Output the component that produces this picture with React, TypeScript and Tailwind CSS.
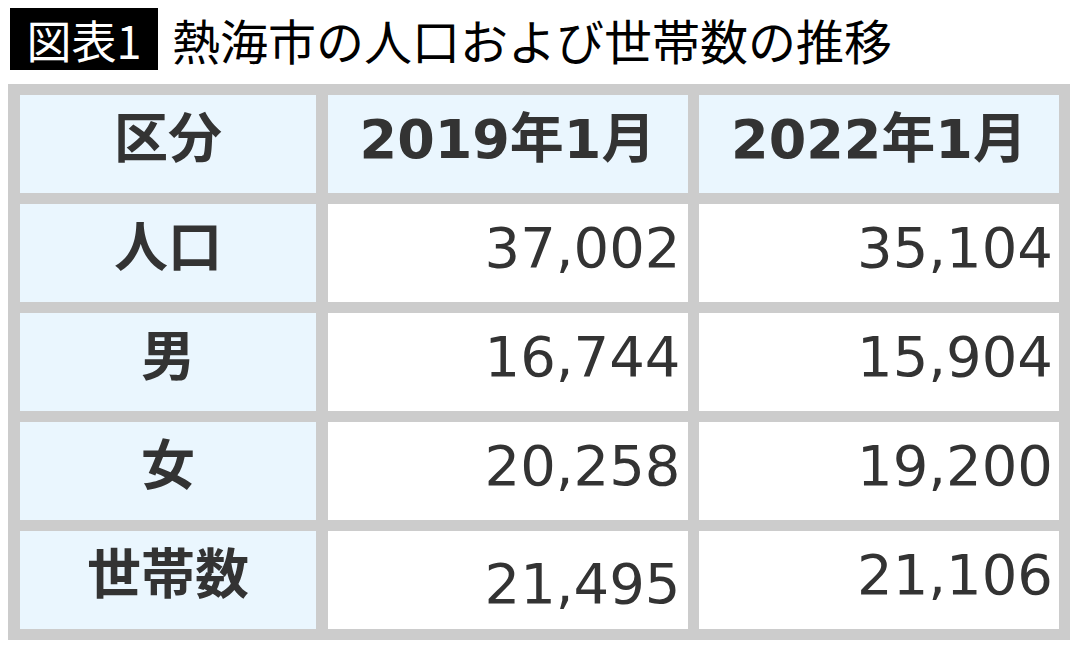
import React from "react";

const rows: { label: string; a: string; b: string; shiftA?: boolean }[] = [
  { label: "人口", a: "37,002", b: "35,104" },
  { label: "男", a: "16,744", b: "15,904" },
  { label: "女", a: "20,258", b: "19,200" },
  { label: "世帯数", a: "21,495", b: "21,106", shiftA: true },
];

export default function App() {
  return (
    <div className="w-[1080px] h-[649px] bg-white overflow-hidden">
      <div className="flex items-center pt-[8px] pl-[10px] font-['Noto_Sans_CJK_JP',sans-serif]">
        <div className="w-[148px] h-[62px] bg-black text-white flex items-center justify-center text-[45px] leading-none">
          図表1
        </div>
        <div className="ml-[14px] text-[48px] leading-none text-black">
          熱海市の人口および世帯数の推移
        </div>
      </div>
      <div className="mt-[14px] ml-[8px] w-[1062px] bg-[#cccccc] pl-[12px] pr-[11px] py-[11px] font-['DejaVu_Sans','Noto_Sans_CJK_JP',sans-serif] text-[#333333] leading-none">
        <div className="grid grid-cols-[296px_360px_360px] grid-rows-[98px_98px_98px_98px_98px] gap-x-[11.5px] gap-y-[11px]">
          {["区分", "2019年1月", "2022年1月"].map((h) => (
            <div
              key={h}
              className="bg-[#eaf6fe] flex items-center justify-center text-[54px] font-bold pb-[8px]"
            >
              {h}
            </div>
          ))}
          {rows.map((r) => (
            <React.Fragment key={r.label}>
              <div className="bg-[#eaf6fe] flex items-center justify-center text-[54px] font-bold pb-[8px]">
                {r.label}
              </div>
              <div
                className={
                  r.shiftA
                    ? "bg-white flex items-center justify-end pr-[7px] text-[56px] pt-[8px]"
                    : "bg-white flex items-center justify-end pr-[7px] text-[56px] pb-[10px]"
                }
              >
                {r.a}
              </div>
              <div className="bg-white flex items-center justify-end pr-[6px] text-[56px] pb-[10px]">
                {r.b}
              </div>
            </React.Fragment>
          ))}
        </div>
      </div>
    </div>
  );
}
